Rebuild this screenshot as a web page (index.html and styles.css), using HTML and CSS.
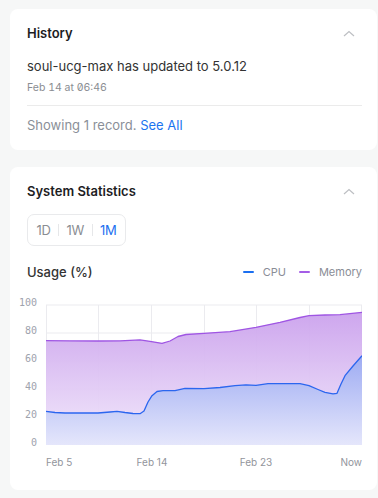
FILE: index.html
```html
<!DOCTYPE html>
<html lang="en">
<head>
    <meta charset="UTF-8">
    <meta name="viewport" content="width=device-width, initial-scale=1.0">
    <title>Device Overview</title>
    <link rel="stylesheet" href="styles.css">
</head>
<body>
    <main class="page">
        <!-- History -->
        <section class="card history">
            <div class="card-header">
                <h2>History</h2>
                <svg class="chevron" width="12" height="7" viewBox="0 0 12 7"><polyline points="1,6 6,1.5 11,6" /></svg>
            </div>
            <p class="event">soul-ucg-max has updated to 5.0.12</p>
            <p class="event-date">Feb 14 at 06:46</p>
            <hr class="divider">
            <p class="summary">Showing 1 record. <a href="#">See All</a></p>
        </section>

        <!-- System Statistics -->
        <section class="card stats">
            <div class="card-header">
                <h2>System Statistics</h2>
                <svg class="chevron" width="12" height="7" viewBox="0 0 12 7"><polyline points="1,6 6,1.5 11,6" /></svg>
            </div>

            <div class="range">
                <button>1D</button>
                <span class="sep"></span>
                <button>1W</button>
                <span class="sep"></span>
                <button class="active">1M</button>
            </div>

            <div class="usage-head">
                <h3>Usage (%)</h3>
                <div class="legend">
                    <span class="key cpu"></span><span>CPU</span>
                    <span class="key mem"></span><span>Memory</span>
                </div>
            </div>

            <svg class="chart" width="345" height="178" viewBox="17 294 345 178">
                <defs>
                    <linearGradient id="memFill" gradientUnits="userSpaceOnUse" x1="0" y1="306" x2="0" y2="446">
                        <stop offset="0" stop-color="#c99eec" />
                        <stop offset="1" stop-color="#f2e9fb" />
                    </linearGradient>
                    <linearGradient id="cpuFill" gradientUnits="userSpaceOnUse" x1="0" y1="306" x2="0" y2="446">
                        <stop offset="0" stop-color="#7189ee" />
                        <stop offset="1" stop-color="#e4e6fb" />
                    </linearGradient>
                </defs>

                <g class="grid">
                    <line x1="46" y1="306" x2="362" y2="306" />
                    <line x1="46" y1="334" x2="362" y2="334" />
                    <line x1="46" y1="362" x2="362" y2="362" />
                    <line x1="46" y1="390" x2="362" y2="390" />
                    <line x1="46" y1="418" x2="362" y2="418" />
                    <line x1="46.5" y1="306" x2="46.5" y2="446" />
                    <line x1="98.5" y1="306" x2="98.5" y2="446" />
                    <line x1="151.5" y1="306" x2="151.5" y2="446" />
                    <line x1="204.5" y1="306" x2="204.5" y2="446" />
                    <line x1="256.5" y1="306" x2="256.5" y2="446" />
                    <line x1="309.5" y1="306" x2="309.5" y2="446" />
                    <line x1="361.5" y1="306" x2="361.5" y2="446" />
                </g>

                <path fill="url(#memFill)" opacity="0.95" d="M46 341.7 L70 341.8 L98 342 L120 341.8 L140 340.8 L150 342.3 L162 344.3 L170 342 L178 337.5 L186 335.5 L204 334.3 L230 332.7 L256 328.3 L280 323.3 L300 318.5 L309 316.7 L325 316 L340 315.7 L362 313.3 L362 446 L46 446 Z" />
                <path fill="url(#cpuFill)" opacity="0.95" d="M46 412.3 L55 413.5 L65 414 L98 414 L110 413 L117 412.3 L125 413.5 L133 414.5 L140 414.7 L144 412 L148 403 L152 396.7 L157 392.5 L163 391.7 L175 391.7 L185 389.3 L204 389.7 L220 388.5 L235 386.7 L246 385.8 L256 386.3 L268 384.7 L300 384.7 L309 386.7 L318 390.5 L325 393.3 L333 394.8 L337 394.3 L341 385 L345 376.7 L353 367 L362 356.7 L362 446 L46 446 Z" />
                <polyline class="line mem-line" points="46,341.7 70,341.8 98,342 120,341.8 140,340.8 150,342.3 162,344.3 170,342 178,337.5 186,335.5 204,334.3 230,332.7 256,328.3 280,323.3 300,318.5 309,316.7 325,316 340,315.7 362,313.3" />
                <polyline class="line cpu-line" points="46,412.3 55,413.5 65,414 98,414 110,413 117,412.3 125,413.5 133,414.5 140,414.7 144,412 148,403 152,396.7 157,392.5 163,391.7 175,391.7 185,389.3 204,389.7 220,388.5 235,386.7 246,385.8 256,386.3 268,384.7 300,384.7 309,386.7 318,390.5 325,393.3 333,394.8 337,394.3 341,385 345,376.7 353,367 362,356.7" />

                <g class="y-labels">
                    <text x="37" y="307">100</text>
                    <text x="37" y="335">80</text>
                    <text x="37" y="363">60</text>
                    <text x="37" y="391">40</text>
                    <text x="37" y="419">20</text>
                    <text x="37" y="447">0</text>
                </g>
                <g class="x-labels">
                    <text x="46" y="467">Feb 5</text>
                    <text x="152" y="467" text-anchor="middle">Feb 14</text>
                    <text x="256" y="467" text-anchor="middle">Feb 23</text>
                    <text x="362" y="467" text-anchor="end">Now</text>
                </g>
            </svg>
        </section>
    </main>
</body>
</html>
```

FILE: styles.css
```css
body {
    margin: 0;
    background-color: #f6f7f7;
    font-family: Inter, "Noto Sans", sans-serif;
    color: #333;
}

.page {
    padding: 9px 1px 0 10px;
    display: flex;
    flex-direction: column;
    gap: 17px;
}

.card {
    background: #fff;
    border-radius: 8px;
    padding: 14px 15px 15px 17px;
}

.card-header {
    display: flex;
    justify-content: space-between;
    align-items: center;
    padding-right: 7px;
}

.card-header h2 {
    margin: 0;
    font-size: 13px;
    line-height: 20px;
    font-weight: 600;
    color: #1d1d1f;
}

.chevron polyline {
    fill: none;
    stroke: #bdbfc3;
    stroke-width: 1.2;
}

.event {
    margin: 13px 0 0;
    font-size: 13px;
    line-height: 20px;
    color: #333;
}

.event-date {
    margin: 4px 0 0;
    font-size: 10.5px;
    line-height: 16px;
    color: #8a8d92;
    font-feature-settings: "zero", "tnum";
}

.divider {
    margin: 9px 0 0;
    border: none;
    border-top: 1px solid #ebebeb;
}

.summary {
    margin: 9px 0 0;
    font-size: 13px;
    line-height: 20px;
    color: #8a8f98;
}

.summary a {
    color: #1b74f0;
    text-decoration: none;
}

.stats {
    padding-bottom: 19px;
}

.range {
    display: inline-flex;
    align-items: center;
    margin-top: 13px;
    height: 30px;
    padding: 0 1px;
    border: 1px solid #e9eaec;
    border-radius: 7px;
}

.range button {
    background: none;
    border: none;
    padding: 0 7.5px;
    font-family: inherit;
    font-size: 13px;
    color: #8a8d92;
    letter-spacing: -0.3px;
    cursor: pointer;
}

.range button.active {
    color: #1b6ff0;
}

.range .sep {
    width: 1px;
    height: 12px;
    background: #e6e7e9;
}

.usage-head {
    display: flex;
    justify-content: space-between;
    align-items: center;
    margin-top: 16px;
}

.usage-head h3 {
    margin: 0;
    font-size: 13px;
    line-height: 20px;
    font-weight: 500;
    color: #333;
}

.legend {
    display: flex;
    align-items: center;
    font-size: 11px;
    color: #8a8d96;
}

.legend .key {
    width: 11px;
    height: 2.5px;
    border-radius: 1px;
    margin-right: 9px;
}

.legend .key.cpu {
    background: #1b6ff0;
}

.legend .key.mem {
    background: #a45de6;
    margin-left: 13px;
}

.chart {
    display: block;
    margin: 11px 0 0 -10px;
}

.grid line {
    stroke: #ebebef;
    stroke-width: 1;
}

.line {
    fill: none;
    stroke-width: 1.3;
    stroke-linejoin: round;
}

.mem-line {
    stroke: #9f55e3;
}

.cpu-line {
    stroke: #2b66ef;
}

.y-labels text {
    font-family: "DejaVu Sans Mono", monospace;
    font-size: 10px;
    fill: #9ea2ad;
    text-anchor: end;
}

.x-labels text {
    font-family: Inter, sans-serif;
    font-size: 10px;
    fill: #92959c;
}
```
